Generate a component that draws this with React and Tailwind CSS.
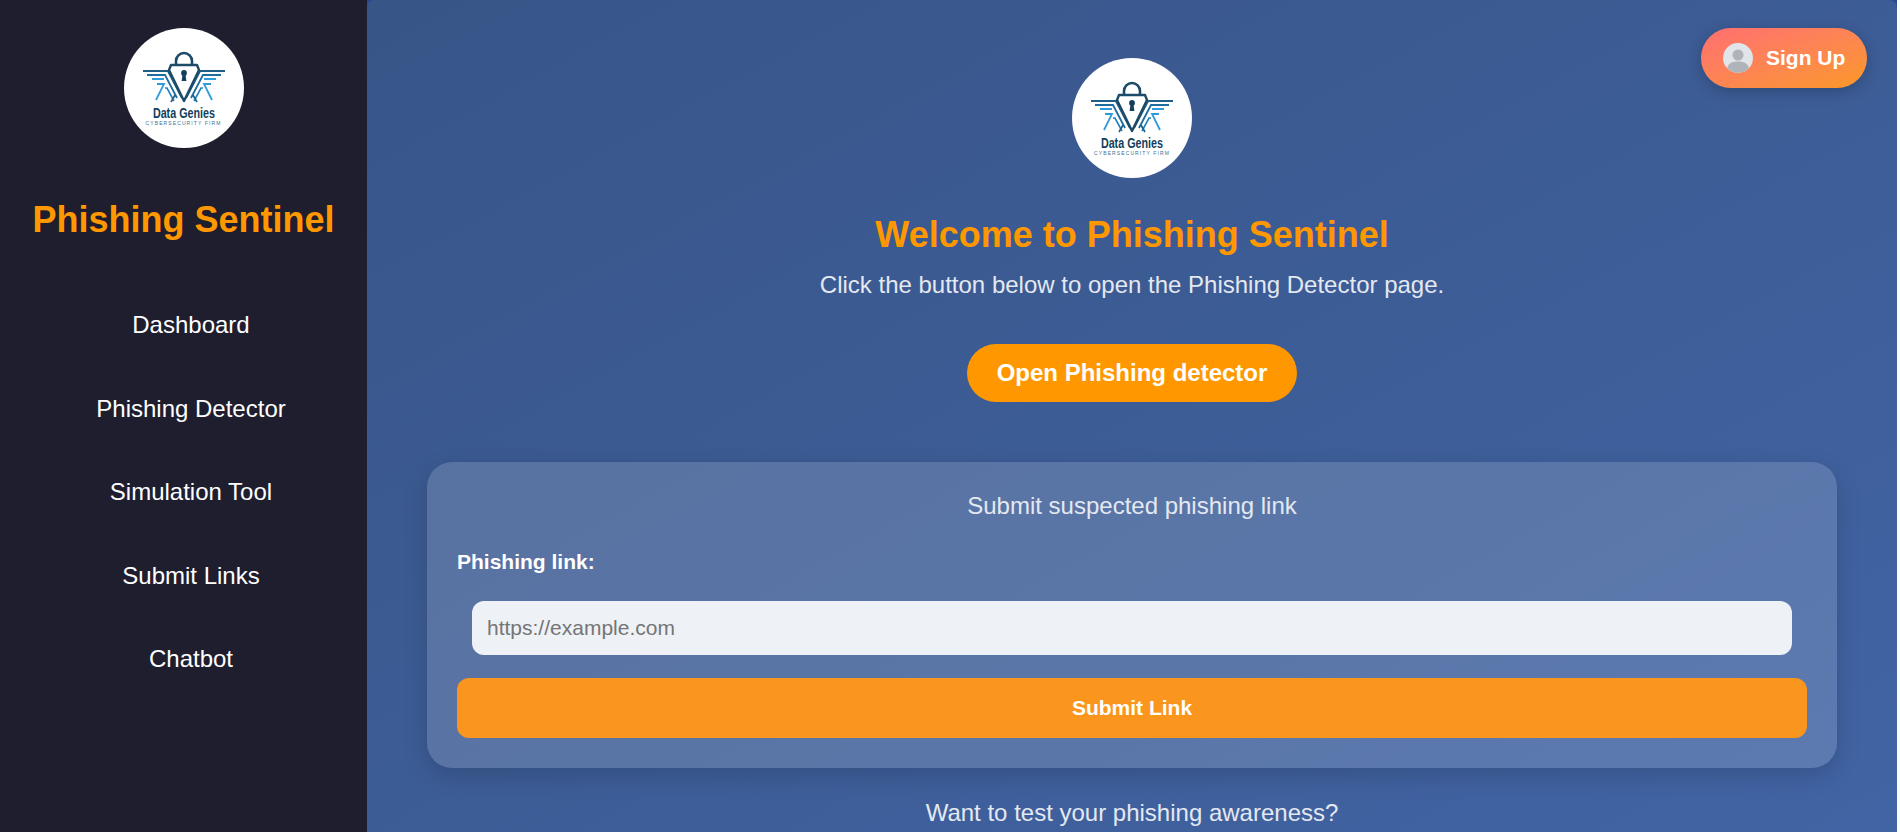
import React from 'react';

const font = { fontFamily: '"Liberation Sans", Arial, sans-serif' };

function Logo() {
  return (
    <div className="w-[120px] h-[120px] rounded-full bg-white shrink-0 overflow-hidden flex flex-col items-center">
      <svg viewBox="0 0 122 78" className="w-[122px] h-[78px] shrink-0" fill="none">
        {/* wings */}
        <path d="M20 43 H45 L59 70 M102 43 H77 L63 70" stroke="#1d5f86" strokeWidth="2" />
        <path d="M24 47 H42 L54 70 M98 47 H80 L68 70" stroke="#1f6d9f" strokeWidth="1.8" />
        <path d="M29 51 H41 M93 51 H81" stroke="#2f9bd8" strokeWidth="1.8" />
        <path d="M34 56 H41 L33 72 M88 56 H81 L89 72" stroke="#2f9bd8" strokeWidth="1.8" />
        <path d="M42 60 H44 L51 73 M80 60 H78 L71 73" stroke="#1f82bd" strokeWidth="1.6" />
        <path d="M52 67 L48 74 M70 67 L74 74" stroke="#1d5f86" strokeWidth="1.6" />
        {/* lock */}
        <path d="M53 37 V33 a8 8 0 0 1 16 0 V37" stroke="#1d4a66" strokeWidth="2.6" />
        <path d="M48 37 H74 L76 42 L61 73 L46 42 Z" stroke="#1d4a66" strokeWidth="2.4" strokeLinejoin="round" fill="#fff" />
        <circle cx="61" cy="45" r="2.9" fill="#123f5c" />
        <path d="M59.6 46 H62.4 L63.4 53 H58.6 Z" fill="#123f5c" />
      </svg>
      <div className="text-[14.5px] leading-[14px] font-bold text-[#123f5c] whitespace-nowrap scale-x-[0.74]">Data Genies</div>
      <div className="text-[5px] leading-[6px] tracking-[1.1px] text-[#3a6f93] whitespace-nowrap">CYBERSECURITY FIRM</div>
    </div>
  );
}

const links = ['Dashboard', 'Phishing Detector', 'Simulation Tool', 'Submit Links', 'Chatbot'];

export default function App() {
  return (
    <div className="flex h-[832px] w-[1897px] overflow-hidden bg-[#1e1e2e]" style={font}>
      {/* SIDEBAR */}
      <aside className="w-[367px] shrink-0 pt-[28px] flex flex-col items-center">
        <Logo />
        <h2 className="mt-[51px] text-[36px] leading-[42px] font-bold text-[#ff9800] whitespace-nowrap">Phishing Sentinel</h2>
        <nav className="mt-[70px] w-full flex flex-col gap-[55.5px] pl-[15px]">
          {links.map((l) => (
            <a key={l} className="text-center text-[24px] leading-[28px] text-white">{l}</a>
          ))}
        </nav>
      </aside>

      {/* MAIN */}
      <div className="flex-1 min-w-0 h-full bg-[#254a8e]">
        <main className="relative w-full h-full overflow-hidden rounded-t-[8px] bg-gradient-to-br from-[#385588] to-[#4164a4] flex flex-col items-center pt-[58px]">
          <button className="absolute top-[28px] right-[30px] w-[166px] h-[60px] rounded-full flex items-center pl-[22px] gap-[13px] bg-gradient-to-br from-[#ff6f6f] to-[#fb981f] shadow-[0_4px_15px_rgba(0,0,0,0.2)]">
            <svg viewBox="0 0 30 30" className="w-[30px] h-[30px]">
              <circle cx="15" cy="15" r="15" fill="#e1e4e8" />
              <circle cx="15" cy="12" r="5.5" fill="#aeb4b9" />
              <path d="M4 25 C6 19 11 18.5 15 18.5 C19 18.5 24 19 26 25 A15 15 0 0 1 4 25 Z" fill="#aeb4b9" />
            </svg>
            <span className="text-[21px] font-bold text-white">Sign Up</span>
          </button>

          <Logo />
          <h1 className="mt-[36px] text-[36px] leading-[42px] font-bold text-[#ff9800]">Welcome to Phishing Sentinel</h1>
          <p className="mt-[16px] text-[24px] leading-[26px] text-[#e4e8f1]">Click the button below to open the Phishing Detector page.</p>
          <button className="mt-[46px] h-[58px] w-[330px] rounded-full bg-[#ff9800] text-[24px] font-bold text-white">Open Phishing detector</button>

          <section className="mt-[60px] w-[1410px] h-[306px] shrink-0 rounded-[25px] bg-white/15 shadow-[0_8px_25px_rgba(0,0,0,0.15)] p-[30px] flex flex-col">
            <h3 className="mt-[1px] text-center text-[24px] leading-[26px] text-[#e4e8f1]">Submit suspected phishing link</h3>
            <label className="mt-[32px] text-[21px] leading-[22px] font-bold text-white">Phishing link:</label>
            <input placeholder="https://example.com" className="mt-[28px] mx-[15px] h-[54px] rounded-[12px] bg-[#eef1f6] px-[15px] text-[21px] placeholder:text-[#757575] outline-none" />
            <button className="mt-[23px] h-[60px] w-full rounded-[12px] bg-[#fa961e] text-[21px] font-bold text-white">Submit Link</button>
          </section>

          <p className="mt-[32px] text-[24px] leading-[26px] text-[#e4e8f1] whitespace-nowrap">Want to test your phishing awareness?</p>
        </main>
      </div>
    </div>
  );
}
